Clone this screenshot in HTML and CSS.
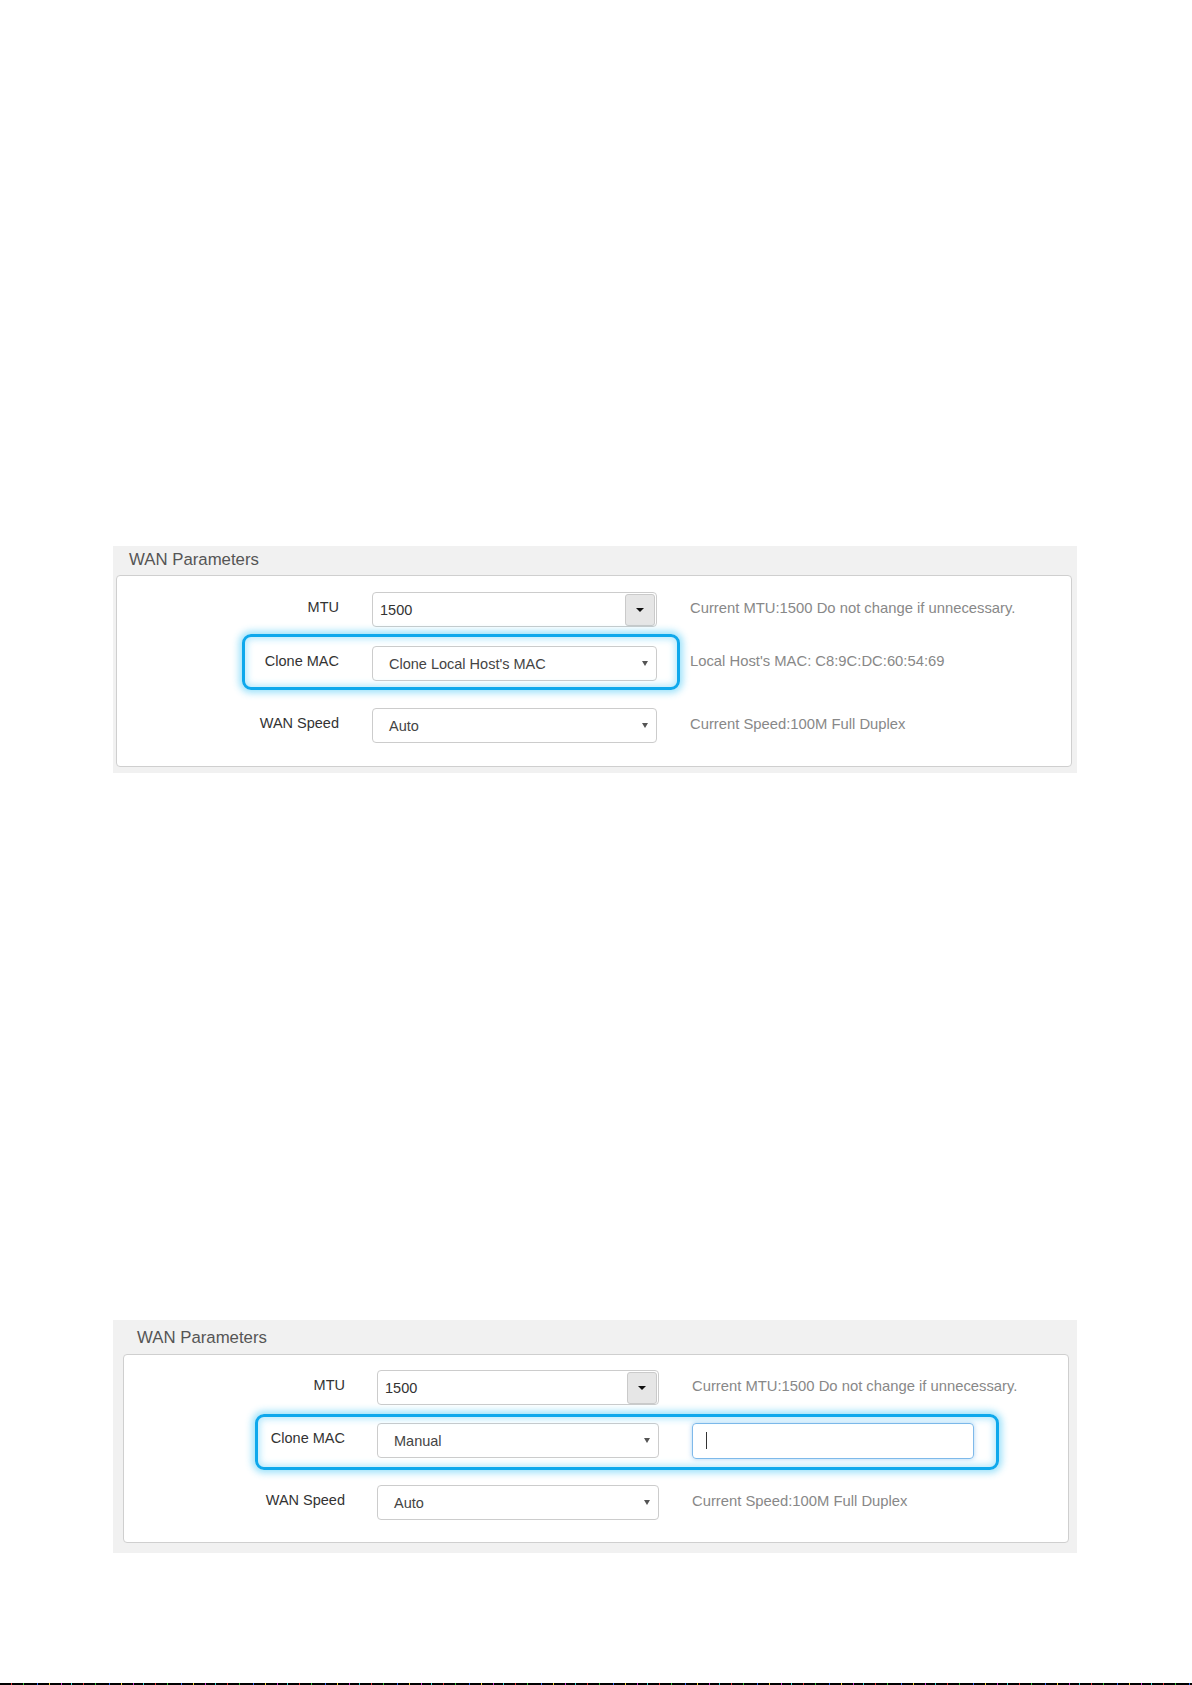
FILE: index.html
```html
<!DOCTYPE html>
<html>

<head>
    <meta name="viewport" content="width=device-width, initial-scale=1" />
    <title>WAN Parameters</title>
    <link rel="stylesheet" href="styles.css">
</head>

<body>
    <div class="sheet">

        <!-- clone local host's MAC -->
        <div class="panel p1">
            <div class="panel-title">WAN Parameters</div>
            <div class="panel-body">
                <div class="row">
                    <div class="label">MTU</div>
                    <div class="combo">
                        <span class="val">1500</span>
                        <span class="spin"><i class="caret dark"></i></span>
                    </div>
                    <div class="help">Current MTU:1500 Do not change if unnecessary.</div>
                </div>
                <div class="row row-mac">
                    <div class="mark"></div>
                    <div class="label">Clone MAC</div>
                    <div class="select">
                        <span class="val">Clone Local Host's MAC</span>
                        <i class="caret"></i>
                    </div>
                    <div class="help">Local Host's MAC: C8:9C:DC:60:54:69</div>
                </div>
                <div class="row">
                    <div class="label">WAN Speed</div>
                    <div class="select">
                        <span class="val">Auto</span>
                        <i class="caret"></i>
                    </div>
                    <div class="help">Current Speed:100M Full Duplex</div>
                </div>
            </div>
        </div>

        <!-- manual MAC -->
        <div class="panel p2">
            <div class="panel-title">WAN Parameters</div>
            <div class="panel-body">
                <div class="row">
                    <div class="label">MTU</div>
                    <div class="combo">
                        <span class="val">1500</span>
                        <span class="spin"><i class="caret dark"></i></span>
                    </div>
                    <div class="help">Current MTU:1500 Do not change if unnecessary.</div>
                </div>
                <div class="row row-mac">
                    <div class="mark"></div>
                    <div class="label">Clone MAC</div>
                    <div class="select">
                        <span class="val">Manual</span>
                        <i class="caret"></i>
                    </div>
                    <div class="mac-input"><span class="cursor"></span></div>
                </div>
                <div class="row">
                    <div class="label">WAN Speed</div>
                    <div class="select">
                        <span class="val">Auto</span>
                        <i class="caret"></i>
                    </div>
                    <div class="help">Current Speed:100M Full Duplex</div>
                </div>
            </div>
        </div>

        <div class="edge"></div>
    </div>
</body>

</html>
```
FILE: styles.css
```css
body {
    margin: 0;
    background-color: #fff;
    font-family: "Liberation Sans", Arial, sans-serif;
    color: #333;
}

.sheet {
    padding-top: 546px;
}

.panel {
    width: 964px;
    margin-left: 113px;
    background-color: #f1f1f1;
}

.p2 {
    margin-top: 547px;
}

.panel-title {
    font-size: 16.8px;
    line-height: 27px;
    height: 29px;
    color: #555;
}

.p1 .panel-title {
    padding-left: 16px;
}

.p2 .panel-title {
    height: 34px;
    line-height: 36px;
    padding-left: 24px;
}

.panel-body {
    background-color: #fff;
    border: 1px solid #cfcfcf;
    border-radius: 4px;
}

.p1 .panel-body {
    margin: 0 5px 0 3px;
    padding: 16px 0 23px;
}

.p1 {
    padding-bottom: 6px;
}

.p2 .panel-body {
    margin: 0 8px 0 10px;
    padding: 15px 0 22px;
}

.p2 {
    padding-bottom: 10px;
}

.row {
    position: relative;
    display: flex;
    align-items: center;
    height: 35px;
    font-size: 14.5px;
}

.p1 .row-mac {
    margin: 19px 0 27px;
}

.p2 .row-mac {
    margin: 18px 0 27px;
}

.label {
    text-align: right;
    margin-bottom: 5px;
    color: #333;
}

.p1 .label {
    width: 222px;
    margin-right: 33px;
}

.p2 .label {
    width: 221px;
    margin-right: 32px;
}

.select,
.combo {
    box-sizing: border-box;
    display: flex;
    align-items: center;
    height: 35px;
    border: 1px solid #ccc;
    border-radius: 4px;
    background-color: #fff;
}

.p1 .select,
.p1 .combo {
    width: 285px;
}

.p2 .select,
.p2 .combo {
    width: 282px;
}

.select {
    padding: 0 8px 0 16px;
    color: #444;
}

.combo {
    padding: 0 1px 0 7px;
}

.val {
    flex: 1;
    white-space: nowrap;
}

.spin {
    box-sizing: border-box;
    display: flex;
    align-items: center;
    justify-content: center;
    width: 30px;
    height: 32px;
    border: 1px solid #cacaca;
    border-radius: 3px;
    background-color: #e6e6e6;
}

.caret {
    width: 0;
    height: 0;
    border-left: 3px solid transparent;
    border-right: 3px solid transparent;
    border-top: 5px solid #555;
}

.caret.dark {
    border-left-width: 4px;
    border-right-width: 4px;
    border-top: 4px solid #111;
}

.help {
    margin-left: 33px;
    margin-bottom: 3px;
    font-size: 14.8px;
    color: #888;
    white-space: nowrap;
}

.p1 .row-mac .help {
    margin-bottom: 5px;
}

.mac-input {
    box-sizing: border-box;
    display: flex;
    align-items: center;
    width: 282px;
    height: 36px;
    margin-left: 33px;
    padding-left: 13px;
    border: 1px solid #7fb9ea;
    border-radius: 4px;
    box-shadow: 0 0 5px rgba(102, 175, 233, 0.55);
}

.cursor {
    width: 1px;
    height: 17px;
    background-color: #333;
}

/* annotation outline drawn over the Clone MAC row */
.mark {
    position: absolute;
    box-sizing: border-box;
    border: 3px solid #0ea8ec;
    border-radius: 9px;
    box-shadow: 0 0 7px 3px rgba(40, 190, 245, 0.45), inset 0 0 7px 2px rgba(40, 190, 245, 0.35);
    pointer-events: none;
}

.p1 .mark {
    left: 125px;
    top: -12px;
    width: 438px;
    height: 56px;
}

.p2 .mark {
    left: 131px;
    top: -9px;
    width: 744px;
    height: 56px;
}

.edge {
    height: 2px;
    margin-top: 130px;
    background: repeating-linear-gradient(90deg,
            #000 0 11px, #d33 11px 12px, #000 12px 23px, #3b3 23px 24px,
            #000 24px 37px, #36e 37px 38px, #000 38px 49px, #ec3 49px 50px,
            #000 50px 61px, #c3c 61px 62px, #000 62px 71px, #3cc 71px 72px);
}
```
